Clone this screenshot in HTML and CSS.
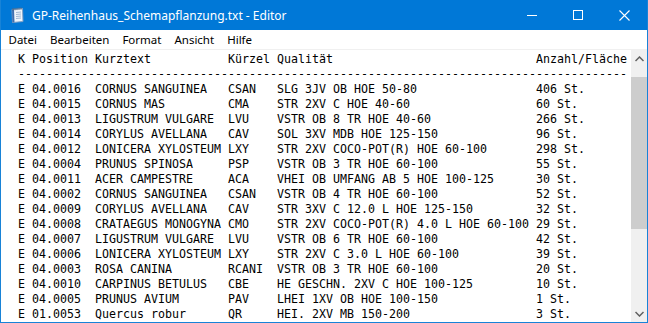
FILE: index.html
```html
<!DOCTYPE html>
<html lang="de">
  <head>
    <meta charset="UTF-8" />
    <title>GP-Reihenhaus_Schemapflanzung.txt - Editor</title>
    <link rel="stylesheet" href="styles.css">
  </head>
  <body>
    <div class="window">
      <!-- Titelleiste -->
      <div class="titlebar">
        <svg class="app-icon" width="16" height="16" viewBox="0 0 16 16">
          <path d="M3 2.5 L13.5 1.5 L14 14.5 L3.5 15.5 Z" fill="#eef4fb" stroke="#7f9fc4" stroke-width="1"/>
          <path d="M3 2.5 L5 2.3 L5.5 15.3 L3.5 15.5 Z" fill="#3d6fb0"/>
          <path d="M7 5.5 L12 5 M7 7.5 L12 7 M7 9.5 L12 9 M7 11.5 L12 11" stroke="#9fb6d2" stroke-width="1"/>
          <path d="M4 1 V3.5 M6 1 V3.3 M8 0.8 V3.1 M10 0.6 V2.9 M12 0.4 V2.7" stroke="#54657a" stroke-width="0.9"/>
        </svg>
        <span class="title">GP-Reihenhaus_Schemapflanzung.txt - Editor</span>
        <div class="controls">
          <div class="ctrl">
            <svg width="10" height="10" viewBox="0 0 10 10"><path d="M0 5.5 H10" stroke="#fff" stroke-width="1"/></svg>
          </div>
          <div class="ctrl">
            <svg width="10" height="10" viewBox="0 0 10 10"><rect x="0.5" y="0.5" width="9" height="9" fill="none" stroke="#fff" stroke-width="1"/></svg>
          </div>
          <div class="ctrl">
            <svg width="11" height="11" viewBox="0 0 11 11"><path d="M0.5 0.5 L10.5 10.5 M10.5 0.5 L0.5 10.5" stroke="#fff" stroke-width="1.1"/></svg>
          </div>
        </div>
      </div>

      <!-- Menü -->
      <div class="menubar">
        <span>Datei</span>
        <span>Bearbeiten</span>
        <span>Format</span>
        <span>Ansicht</span>
        <span>Hilfe</span>
      </div>

      <!-- Textbereich -->
      <div class="editor">
<pre class="text">K Position Kurztext           Kürzel Qualität                             Anzahl/Fläche
---------------------------------------------------------------------------------------
E 04.0016  CORNUS SANGUINEA   CSAN   SLG 3JV OB HOE 50-80                 406 St.
E 04.0015  CORNUS MAS         CMA    STR 2XV C HOE 40-60                  60 St.
E 04.0013  LIGUSTRUM VULGARE  LVU    VSTR OB 8 TR HOE 40-60               266 St.
E 04.0014  CORYLUS AVELLANA   CAV    SOL 3XV MDB HOE 125-150              96 St.
E 04.0012  LONICERA XYLOSTEUM LXY    STR 2XV COCO-POT(R) HOE 60-100       298 St.
E 04.0004  PRUNUS SPINOSA     PSP    VSTR OB 3 TR HOE 60-100              55 St.
E 04.0011  ACER CAMPESTRE     ACA    VHEI OB UMFANG AB 5 HOE 100-125      30 St.
E 04.0002  CORNUS SANGUINEA   CSAN   VSTR OB 4 TR HOE 60-100              52 St.
E 04.0009  CORYLUS AVELLANA   CAV    STR 3XV C 12.0 L HOE 125-150         32 St.
E 04.0008  CRATAEGUS MONOGYNA CMO    STR 2XV COCO-POT(R) 4.0 L HOE 60-100 29 St.
E 04.0007  LIGUSTRUM VULGARE  LVU    VSTR OB 6 TR HOE 60-100              42 St.
E 04.0006  LONICERA XYLOSTEUM LXY    STR 2XV C 3.0 L HOE 60-100           39 St.
E 04.0003  ROSA CANINA        RCANI  VSTR OB 3 TR HOE 60-100              20 St.
E 04.0010  CARPINUS BETULUS   CBE    HE GESCHN. 2XV C HOE 100-125         10 St.
E 04.0005  PRUNUS AVIUM       PAV    LHEI 1XV OB HOE 100-150              1 St.
E 01.0053  Quercus robur      QR     HEI. 2XV MB 150-200                  3 St.</pre>
        <div class="scrollbar">
          <div class="arrow">
            <svg width="9" height="6" viewBox="0 0 9 6"><path d="M0.5 5 L4.5 1 L8.5 5" fill="none" stroke="#606060" stroke-width="1.5"/></svg>
          </div>
          <div class="track">
            <div class="thumb"></div>
          </div>
          <div class="arrow">
            <svg width="9" height="6" viewBox="0 0 9 6"><path d="M0.5 1 L4.5 5 L8.5 1" fill="none" stroke="#606060" stroke-width="1.5"/></svg>
          </div>
        </div>
      </div>
    </div>
  </body>
</html>
```

FILE: styles.css
```css
body {
  margin: 0;
  background-color: #fff;
}

.window {
  width: 648px;
  height: 323px;
  box-sizing: border-box;
  border: 1px solid #1883d7;
  border-top: none;
  display: flex;
  flex-direction: column;
  overflow: hidden;
}

/* Titelleiste */
.titlebar {
  height: 30px;
  flex: none;
  background-color: #0078d7;
  display: flex;
  align-items: center;
  color: #fff;
  font-family: "Noto Sans", sans-serif;
  font-size: 12px;
}

.app-icon {
  margin-left: 8px;
  margin-right: 7px;
}

.title {
  flex: 1;
  white-space: nowrap;
}

.controls {
  display: flex;
  height: 100%;
}

.ctrl {
  width: 46px;
  height: 100%;
  display: flex;
  align-items: center;
  justify-content: center;
}

/* Menü */
.menubar {
  height: 19px;
  flex: none;
  display: flex;
  align-items: center;
  padding-left: 1px;
  border-bottom: 1px solid #f0f0f0;
  font-family: "Noto Sans", sans-serif;
  font-size: 11.5px;
  color: #000;
}

.menubar span {
  padding: 0 6.5px;
}

/* Textbereich */
.editor {
  flex: 1;
  display: flex;
  min-height: 0;
}

.text {
  flex: 1;
  margin: 0;
  padding: 2px 0 0 17px;
  overflow: hidden;
  font-family: "DejaVu Sans Mono", monospace;
  font-size: 11.63px;
  line-height: 15px;
  color: #000;
  white-space: pre;
}

.scrollbar {
  width: 16px;
  flex: none;
  background-color: #f0f0f0;
  display: flex;
  flex-direction: column;
}

.arrow {
  height: 17px;
  flex: none;
  display: flex;
  align-items: center;
  justify-content: center;
}

.track {
  flex: 1;
  padding-top: 10px;
}

.thumb {
  height: 152px;
  background-color: #cdcdcd;
}
```
